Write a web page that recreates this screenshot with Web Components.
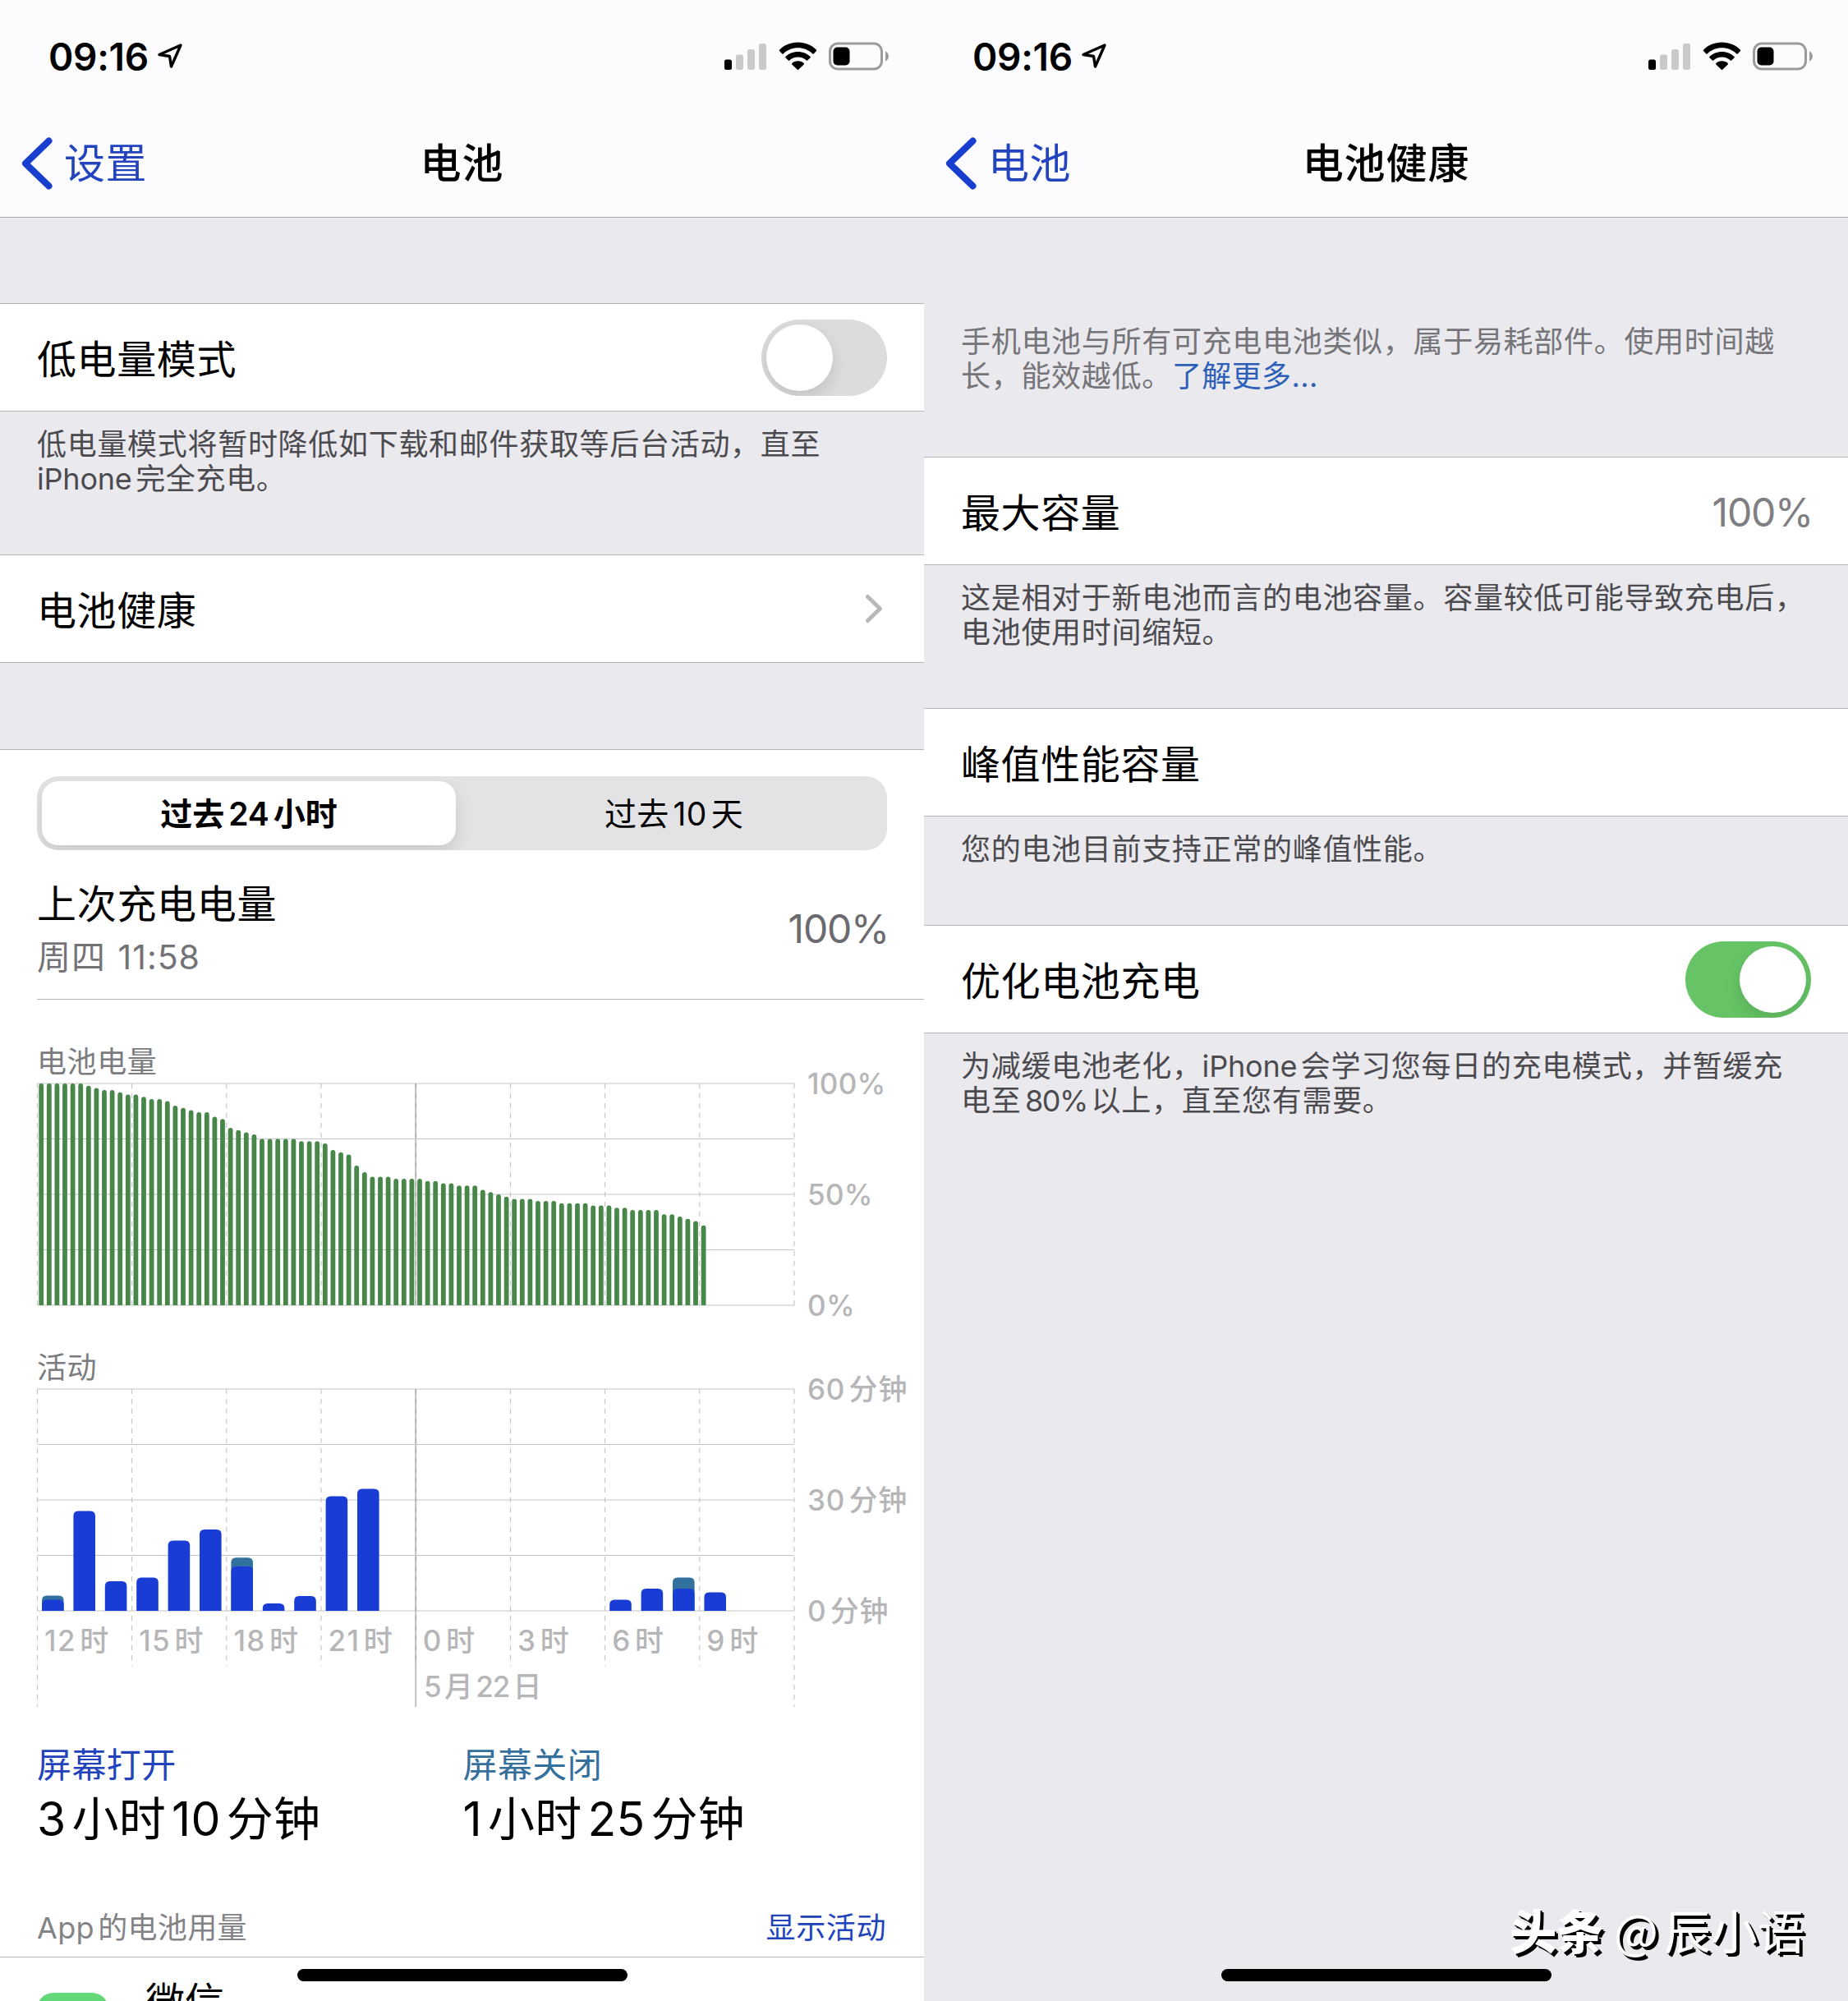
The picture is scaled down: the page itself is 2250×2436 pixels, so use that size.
<!DOCTYPE html>
<html lang="zh-CN">
<head>
<meta charset="utf-8">
<title>电池</title>
<style>
	body {
		margin: 0;
		display: flex;
		width: 2250px;
		height: 2436px;
		overflow: hidden;
		font-family: Inter, "Noto Sans CJK SC", sans-serif;
		text-autospace: normal;
		color: #000;
	}
</style>
</head>
<body>

<phone-screen>
	<status-bar time="09:16"></status-bar>
	<nav-bar back="设置" heading="电池"></nav-bar>
	<setting-row style="margin-top: 104px">低电量模式<toggle-switch slot="end"></toggle-switch></setting-row>
	<section-note style="height: 174px">低电量模式将暂时降低如下载和邮件获取等后台活动，直至<br><span>iPhone</span>完全充电。</section-note>
	<setting-row>电池健康<disclosure-arrow slot="end"></disclosure-arrow></setting-row>
	<usage-panel>
		<segmented-control>
			<span slot="active">过去24小时</span>
			<span>过去10天</span>
		</segmented-control>
		<last-charge when="周四 11:58" level="100%">上次充电电量</last-charge>
		<usage-chart type="level" heading="电池电量" labels="100%,50%,0%"></usage-chart>
		<usage-chart type="activity" heading="活动" labels="60分钟,30分钟,0分钟"
			hours="12时,15时,18时,21时,0时,3时,6时,9时" day="5月22日"></usage-chart>
		<screen-time>
			<time-total heading="屏幕打开" style="--accent: #2243bb">3小时10分钟</time-total>
			<time-total heading="屏幕关闭" style="--accent: #34709b">1小时25分钟</time-total>
		</screen-time>
		<app-usage heading="App的电池用量" action="显示活动">微信</app-usage>
	</usage-panel>
	<home-indicator></home-indicator>
</phone-screen>

<phone-screen>
	<status-bar time="09:16"></status-bar>
	<nav-bar back="电池" heading="电池健康"></nav-bar>
	<section-note style="height: 162px; margin-top: 129px; --pad: 1px; --note-color: #757479">手机电池与所有可充电电池类似，属于易耗部件。使用时间越<br>长，能效越低。<a>了解更多...</a></section-note>
	<setting-row>最大容量<span slot="end">100%</span></setting-row>
	<section-note style="height: 174px">这是相对于新电池而言的电池容量。容量较低可能导致充电后，电池使用时间缩短。</section-note>
	<setting-row>峰值性能容量</setting-row>
	<section-note style="height: 132px">您的电池目前支持正常的峰值性能。</section-note>
	<setting-row>优化电池充电<toggle-switch slot="end" on></toggle-switch></setting-row>
	<section-note>为减缓电池老化，<span>iPhone</span>会学习您每日的充电模式，并暂缓充<br>电至<span style="letter-spacing: -1.4px">80%</span>以上，直至您有需要。</section-note>
	<author-mark><b>头条</b> @辰小语</author-mark>
	<home-indicator></home-indicator>
</phone-screen>

<script>
const html = (strings, ...expressions) => {
	const template = document.createElement('template');
	template.innerHTML = strings.reduce(
		(result, string, index) => result + string + (expressions[index] ?? ''), ''
	);
	return template;
};

// Defines an element which only needs a template.
// Every [data-text] node is filled from the attribute it names.
const define = (name, template) => {
	customElements.define(name, class extends HTMLElement {
		constructor() {
			super();
			this.attachShadow({mode: 'open'}).appendChild(template.content.cloneNode(true));
		}

		connectedCallback() {
			this.shadowRoot.querySelectorAll('[data-text]').forEach((node) => {
				node.textContent = this.getAttribute(node.dataset.text);
			});
		}
	});
};

/**
 * Screen frame
 */

define('phone-screen', html`
<style>
	:host {
		position: relative;
		display: flex;
		flex-direction: column;
		flex: none;
		width: 1125px;
		height: 2436px;
		overflow: hidden;
		background: #eae9ee;
	}
</style>
<slot></slot>
`);

define('status-bar', html`
<style>
	:host {
		display: flex;
		align-items: center;
		justify-content: space-between;
		box-sizing: border-box;
		flex: none;
		height: 132px;
		padding: 6px 41px 0 59px;
		background: #fcfcfe;
	}
	div { display: flex; align-items: center; }
	.time {
		font-size: 46px;
		font-weight: 600;
		line-height: 60px;
		letter-spacing: -0.3px;
	}
	svg { display: block; margin-bottom: 2px; }
	.arrow { margin-left: 10px; }
</style>
<div>
	<span class="time" data-text="time"></span>
	<svg class="arrow" width="32" height="32" viewBox="0 0 32 32" fill="none" stroke="#000" stroke-width="3.4" stroke-linejoin="round">
		<path d="M29 3 L3 14.5 L15.5 16.5 L17.5 29 Z"/>
	</svg>
</div>
<svg width="202" height="36" viewBox="0 0 202 36">
	<rect x="0" y="22.500" width="9" height="12.500" rx="2.500"/>
	<g fill="#cacacc">
		<rect x="14" y="16.500" width="9" height="18.500" rx="2.500"/>
		<rect x="28" y="10" width="9" height="25" rx="2.500"/>
		<rect x="42" y="3" width="9" height="32" rx="2.500"/>
	</g>
	<path d="M89.500 1.500 C98.500 1.500 106.500 5 112 10.700 Q112.600 11.400 112 12.100 L108.700 15.400 Q108 16 107.300 15.400 C102.500 10.900 96.300 8.300 89.500 8.300 C82.700 8.300 76.500 10.900 71.700 15.400 Q71 16 70.300 15.400 L67 12.100 Q66.400 11.400 67 10.700 C72.500 5 80.500 1.500 89.500 1.500 Z"/>
	<path d="M89.500 12.900 C95.500 12.900 100.800 15.200 104.600 18.900 Q105.200 19.600 104.600 20.300 L101.200 23.600 Q100.500 24.200 99.800 23.600 C97 21.100 93.500 19.600 89.500 19.600 C85.500 19.600 82 21.100 79.200 23.600 Q78.500 24.200 77.800 23.600 L74.400 20.300 Q73.800 19.600 74.400 18.900 C78.200 15.200 83.500 12.900 89.500 12.900 Z"/>
	<path d="M89.500 24.300 C92.400 24.300 95 25.400 96.700 27 Q97.300 27.700 96.700 28.400 L90.200 34.700 Q89.500 35.300 88.800 34.700 L82.300 28.400 Q81.700 27.700 82.300 27 C84 25.400 86.600 24.300 89.500 24.300 Z"/>
	<rect x="128.500" y="3" width="63" height="31" rx="9.500" fill="none" stroke="#9b9b9d" stroke-width="3"/>
	<rect x="132.500" y="7.500" width="20" height="22" rx="5"/>
	<path d="M196 12.500 C201.300 14.500 201.300 22.500 196 24.500 Z" fill="#9b9b9d"/>
</svg>
`);

define('nav-bar', html`
<style>
	:host {
		display: grid;
		grid-template-columns: 1fr auto 1fr;
		align-items: center;
		flex: none;
		height: 132px;
		border-bottom: 1px solid #a9a9ad;
		background: #fcfcfe;
		font-size: 50px;
		line-height: 70px;
		letter-spacing: 0.4px;
	}
	.back {
		display: flex;
		align-items: center;
		color: #2244bf;
	}
	svg { margin: 1px 13px 0 26px; }
	span, b { padding-top: 2px; }
	b { font-weight: 500; letter-spacing: 0.9px; }
</style>
<div class="back">
	<svg width="39" height="64" viewBox="0 0 39 64" fill="none" stroke="#183ed0" stroke-width="8" stroke-linecap="round" stroke-linejoin="round">
		<path d="M33.500 4.500 L5 32 L33.500 59.500"/>
	</svg>
	<span data-text="back"></span>
</div>
<b data-text="heading"></b>
`);

define('home-indicator', html`
<style>
	:host {
		position: absolute;
		left: 361.5px;
		bottom: 24px;
		width: 402px;
		height: 15px;
		border-radius: 7.5px;
		background: #000;
	}
</style>
`);

define('author-mark', html`
<style>
	:host {
		position: absolute;
		right: 53px;
		bottom: 48px;
		font-family: "Noto Sans CJK SC", sans-serif;
		font-size: 57px;
		line-height: 80px;
		color: #fff;
		text-shadow: 2px 2px 0 #000, 4px 4px 0 #000;
		white-space: nowrap;
	}
	::slotted(b) { font-weight: 900; }
</style>
<slot></slot>
`);

/**
 * List parts
 */

define('setting-row', html`
<style>
	:host {
		display: flex;
		align-items: center;
		justify-content: space-between;
		box-sizing: border-box;
		flex: none;
		height: 132px;
		padding: 0 45px;
		border: solid #b5b5b9;
		border-width: 1px 0;
		background: #fff;
		font-size: 48px;
		line-height: 60px;
		letter-spacing: 0.6px;
	}
	.label { padding-top: 6px; }
	::slotted(span) {
		margin-right: -2px;
		padding-top: 4px;
		color: #7f7f83;
		letter-spacing: -1.2px;
	}
</style>
<div class="label"><slot></slot></div>
<slot name="end"></slot>
`);

define('section-note', html`
<style>
	:host {
		display: block;
		box-sizing: border-box;
		flex: none;
		padding: var(--pad, 19px) 44px 0 45px;
		font-size: 36px;
		line-height: 42.3px;
		letter-spacing: 0.7px;
		color: var(--note-color, #4b4a4f);
	}
	::slotted(span) { letter-spacing: -0.2px; }
	::slotted(a) { color: #2d5fb8; letter-spacing: 0.4px; text-autospace: no-autospace; }
</style>
<slot></slot>
`);

define('toggle-switch', html`
<style>
	:host {
		display: flex;
		box-sizing: border-box;
		width: 153px;
		height: 93px;
		margin-top: 1px;
		padding: 6px;
		border-radius: 47px;
		background: #dcdcde;
		overflow: hidden;
	}
	:host([on]) {
		justify-content: flex-end;
		background: #66c466;
	}
	i {
		width: 81px;
		height: 81px;
		border-radius: 50%;
		background: #fff;
		box-shadow: 0 8px 20px rgba(0, 0, 0, 0.12);
	}
</style>
<i></i>
`);

define('disclosure-arrow', html`
<style>
	:host { display: block; margin-right: 5px; }
	svg { display: block; }
</style>
<svg width="22" height="36" viewBox="0 0 22 36" fill="none" stroke="#b9b9bb" stroke-width="5" stroke-linecap="round" stroke-linejoin="round">
	<path d="M3.500 3.500 L18.500 18 L3.500 32.500"/>
</svg>
`);

/**
 * Usage panel
 */

define('usage-panel', html`
<style>
	:host {
		display: flex;
		flex-direction: column;
		flex: none;
		margin-top: 105px;
		padding-top: 32px;
		border-top: 1px solid #b5b5b9;
		background: #fff;
	}
</style>
<slot></slot>
`);

define('segmented-control', html`
<style>
	:host {
		display: flex;
		flex: none;
		box-sizing: border-box;
		height: 90px;
		margin: 0 45px;
		padding: 6px;
		border-radius: 26px;
		background: #e3e3e5;
		font-size: 39px;
		line-height: 79px;
		letter-spacing: 0.4px;
		text-align: center;
		overflow: hidden;
	}
	.active {
		width: 504px;
		border-radius: 20px;
		background: #fff;
		font-weight: 600;
		letter-spacing: 0;
		box-shadow: 0 8px 20px rgba(0, 0, 0, 0.12);
	}
	.other { flex: 1; padding-left: 12px; }
</style>
<div class="active"><slot name="active"></slot></div>
<div class="other"><slot></slot></div>
`);

define('last-charge', html`
<style>
	:host {
		display: flex;
		align-items: center;
		justify-content: space-between;
		box-sizing: border-box;
		flex: none;
		height: 182px;
		margin-left: 45px;
		padding: 15px 43px 0 0;
		border-bottom: 1px solid #b5b5b9;
		font-size: 48px;
		line-height: 64px;
		letter-spacing: 0.7px;
	}
	.when { font-size: 41px; color: #737377; letter-spacing: 1px; word-spacing: 2px; }
	.level { padding-bottom: 4px; color: #6b6b6f; letter-spacing: -1.2px; }
</style>
<div>
	<div><slot></slot></div>
	<div class="when" data-text="when"></div>
</div>
<div class="level" data-text="level"></div>
`);

define('screen-time', html`
<style>
	:host {
		display: grid;
		grid-template-columns: 1fr 1fr;
		flex: none;
		margin: 44px 43px 0 45px;
	}
</style>
<slot></slot>
`);

define('time-total', html`
<style>
	:host { display: block; font-size: 57px; line-height: 72px; letter-spacing: 0.2px; }
	.heading { font-size: 42px; line-height: 60px; letter-spacing: 0.4px; color: var(--accent); }
</style>
<div class="heading" data-text="heading"></div>
<slot></slot>
`);

define('app-usage', html`
<style>
	:host { display: block; }
	.head {
		display: flex;
		justify-content: space-between;
		padding: 74px 46px 13px 45px;
		border-bottom: 1px solid #b5b5b9;
		font-size: 36px;
		line-height: 44px;
		letter-spacing: 0.3px;
		color: #838387;
	}
	.action { color: #2244bb; letter-spacing: 0.6px; }
	.app {
		display: flex;
		gap: 45px;
		padding: 24px 45px 0;
		font-size: 48px;
		line-height: 60px;
	}
	i {
		width: 87px;
		height: 87px;
		margin-top: 19px;
		border-radius: 20px;
		background: linear-gradient(#67d97b, #3fc659);
	}
</style>
<div class="head"><span data-text="heading"></span><span class="action" data-text="action"></span></div>
<div class="app"><i></i><slot></slot></div>
`);

/**
 * UsageChart
 */

// Battery level in percent, one sample each 15 minutes.
const levels = [
	100, 100, 100, 100, 100, 100, 99, 98, 97, 97, 96, 95, 95, 94, 93, 93, 92,
	90, 89, 88, 87, 87, 85, 84, 80, 79, 78, 77, 75, 75, 75, 75, 75, 74, 74, 74,
	73, 70, 69, 68, 63, 60, 58, 58, 58, 57, 57, 57, 57, 56, 56, 55, 55, 54, 54,
	54, 52, 51, 50, 49, 48, 48, 48, 47, 47, 47, 46, 46, 46, 46, 45, 45, 45, 44,
	44, 43, 43, 43, 43, 41, 41, 40, 39, 38, 36
];

// [hour index, minutes with the screen on, total minutes]
const activity = [
	[0, 3, 4.1], [1, 27], [2, 8], [3, 9], [4, 19], [5, 22], [6, 12, 14.4],
	[7, 2], [8, 4], [9, 31], [10, 33], [18, 3], [19, 6], [20, 6, 9], [21, 5]
];

const usageChartTemplate = html`
<style>
	:host { display: block; flex: none; padding: 54px 0 0 45px; }
	.heading {
		font-size: 36px;
		line-height: 44px;
		letter-spacing: 0.6px;
		color: #7c7c80;
	}
	.plot { display: flex; height: 270px; margin-top: 4px; }
	svg { display: block; flex: none; width: 922px; height: 270px; overflow: visible; }
	.labels {
		display: flex;
		flex-direction: column;
		justify-content: space-between;
		margin: -22px 0 -22px 16px;
	}
	.labels, .hours, .day {
		font-size: 35px;
		font-weight: 500;
		line-height: 44px;
		letter-spacing: 0.8px;
		color: #b6b6b8;
		white-space: nowrap;
	}
	.hours {
		display: grid;
		grid-template-columns: repeat(8, 115.2px);
		padding: 14px 0 0 9px;
		letter-spacing: 1.4px;
	}
	.day { padding: 12px 0 0 471px; letter-spacing: -1.1px; }
	:host([type=level]) .labels { letter-spacing: 0.3px; }
	:host([type=level]) .hours, :host([type=level]) .day { display: none; }
</style>
<div class="heading"></div>
<div class="plot"><svg></svg><div class="labels"></div></div>
<div class="hours"></div>
<div class="day"></div>
`;

class UsageChart extends HTMLElement {
	constructor() {
		super();
		this.attachShadow({mode: 'open'}).appendChild(
			usageChartTemplate.content.cloneNode(true)
		);
	}

	static get height() {
		return 270;
	}

	static get left() {
		return 0.4;
	}

	// Width of three hours.
	static get step() {
		return 115.2;
	}

	connectedCallback() {
		const {shadowRoot} = this;
		const find = (selector) => shadowRoot.querySelector(selector);

		find('.heading').textContent = this.getAttribute('heading');
		find('.day').textContent = this.getAttribute('day');
		this.fill(find('.labels'), 'labels');
		this.fill(find('.hours'), 'hours');
		find('svg').innerHTML = this.grid + (this.isLevel ? this.levelBars : this.activityBars);
	}

	fill(parent, name) {
		for (const text of (this.getAttribute(name) || '').split(',')) {
			const span = document.createElement('span');
			span.textContent = text;
			parent.appendChild(span);
		}
	}

	get isLevel() {
		return this.getAttribute('type') === 'level';
	}

	get grid() {
		const {height, left, step} = UsageChart;
		let lines = '';

		for (let i = 0; i <= 4; i++) {
			const y = i * height / 4;
			lines += `<path d="M${left} ${y} H${left + step * 8}" stroke="#c4c4c6"/>`;
		}
		for (let i = 0; i <= 8; i++) {
			const x = left + step * i;
			let bottom = height;
			if (!this.isLevel) bottom = i % 4 ? 337 : 387;
			// Midnight has a solid line under the dashes.
			if (i === 4) lines += `<path d="M${x} 0 V${bottom}" stroke="#c2c2c4" stroke-width="2"/>`;
			lines += `<path d="M${x} 0 V${i === 4 ? Math.min(bottom, 337) : bottom}" stroke="${i === 4 ? '#a4a4a6' : '#bfbfc1'}" stroke-dasharray="6 6"/>`;
		}
		return `<g fill="none">${lines}</g>`;
	}

	bar(center, width, barHeight, radius, fill) {
		const {height} = UsageChart;
		const r = Math.min(radius, barHeight);
		return `<path fill="${fill}" d="M${center - width / 2} ${height} v${r - barHeight}
			q0 ${-r} ${r} ${-r} h${width - r * 2} q${r} 0 ${r} ${r} V${height} Z"/>`;
	}

	get levelBars() {
		const {height, left, step} = UsageChart;
		return levels.map((level, index) =>
			this.bar(left + step / 12 * (index + 0.5), 5.8, level * height / 100, 2.9, '#48874a')
		).join('');
	}

	get activityBars() {
		const {height, left, step} = UsageChart;
		return activity.map(([hour, on, total = on]) => {
			const center = left + step / 3 * (hour + 0.5) - 0.3;
			const back = total > on ? this.bar(center, 26.6, total * height / 60, 6, '#32709f') : '';
			return back + this.bar(center, 26.6, on * height / 60, 6, '#193dd4');
		}).join('');
	}
}

customElements.define('usage-chart', UsageChart);
</script>
</body>
</html>
